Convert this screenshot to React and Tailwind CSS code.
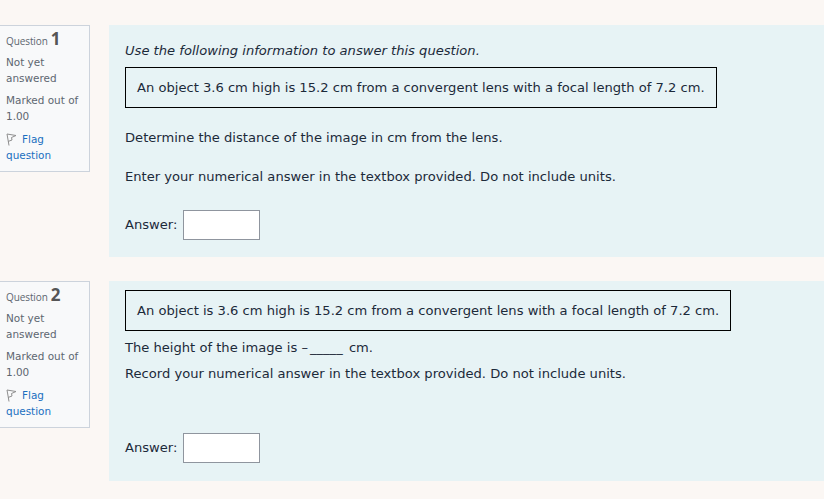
import React from "react";

const FlagIcon = () => (
  <svg width="11" height="13" viewBox="0 0 11 13" fill="none" className="shrink-0">
    <path d="M1 1 L3 12.5 M1 1 L10 2.5 L5.5 4.5 L6 7 L2 8.5" stroke="#8f8f8f" strokeWidth="1" />
  </svg>
);

const QuestionInfo = ({ number }) => (
  <div className="w-[91px] h-[147px] shrink-0 -ml-px border border-[#ccd3dc] bg-[#f8f9fa] pl-[6px] pr-1 pt-[5px] text-[10.45px] leading-[16px] text-[#5d6670]">
    <div className="h-[19px] flex items-baseline gap-[3px] font-['Open_Sans',sans-serif] text-[10px] tracking-[-0.1px]">
      Question <span className="text-[17px] font-bold text-[#555]">{number}</span>
    </div>
    <div className="mt-[4px]">Not yet answered</div>
    <div className="mt-[6px]">Marked out of 1.00</div>
    <div className="mt-[7px] text-[#1a6fc0]">
      <span className="flex items-center gap-[5px]">
        <FlagIcon /> Flag
      </span>
      question
    </div>
  </div>
);

const InfoBox = ({ children }) => (
  <div className="w-fit border border-black px-[11px] pt-[11px] pb-[10px] leading-[18px]">{children}</div>
);

const Answer = ({ className }) => (
  <div className={`flex items-center gap-[6px] ${className}`}>
    <span>Answer:</span>
    <input className="w-[77px] h-[30px] bg-white border border-[#8f959e]" />
  </div>
);

export default function App() {
  return (
    <div className="w-[824px] h-[499px] overflow-hidden bg-[#fbf7f4] pt-[25px] font-['DejaVu_Sans',Verdana,sans-serif] text-[13.1px] text-[#1c2a3a]">
      <div className="flex gap-[19px] h-[232px]">
        <QuestionInfo number="1" />
        <div className="flex-1 bg-[#e7f3f5] pl-[16px] pt-[17px]">
          <p className="italic leading-[18px]">Use the following information to answer this question.</p>
          <div className="mt-[7px]">
            <InfoBox>An object 3.6 cm high is 15.2 cm from a convergent lens with a focal length of 7.2 cm.</InfoBox>
          </div>
          <p className="mt-[21px] leading-[18px]">Determine the distance of the image in cm from the lens.</p>
          <p className="mt-[21px] leading-[18px]">Enter your numerical answer in the textbox provided. Do not include units.</p>
          <Answer className="mt-[24px]" />
        </div>
      </div>
      <div className="flex gap-[19px] h-[200px] mt-[24px]">
        <QuestionInfo number="2" />
        <div className="flex-1 bg-[#e7f3f5] pl-[16px] pt-[9px]">
          <InfoBox>An object is 3.6 cm high is 15.2 cm from a convergent lens with a focal length of 7.2 cm.</InfoBox>
          <p className="mt-[8px] leading-[18px]">The height of the image is <span className="mr-[2px]">–</span>_____ <span className="ml-[2px]">cm.</span></p>
          <p className="mt-[8px] leading-[18px]">Record your numerical answer in the textbox provided. Do not include units.</p>
          <Answer className="mt-[50px]" />
        </div>
      </div>
    </div>
  );
}
